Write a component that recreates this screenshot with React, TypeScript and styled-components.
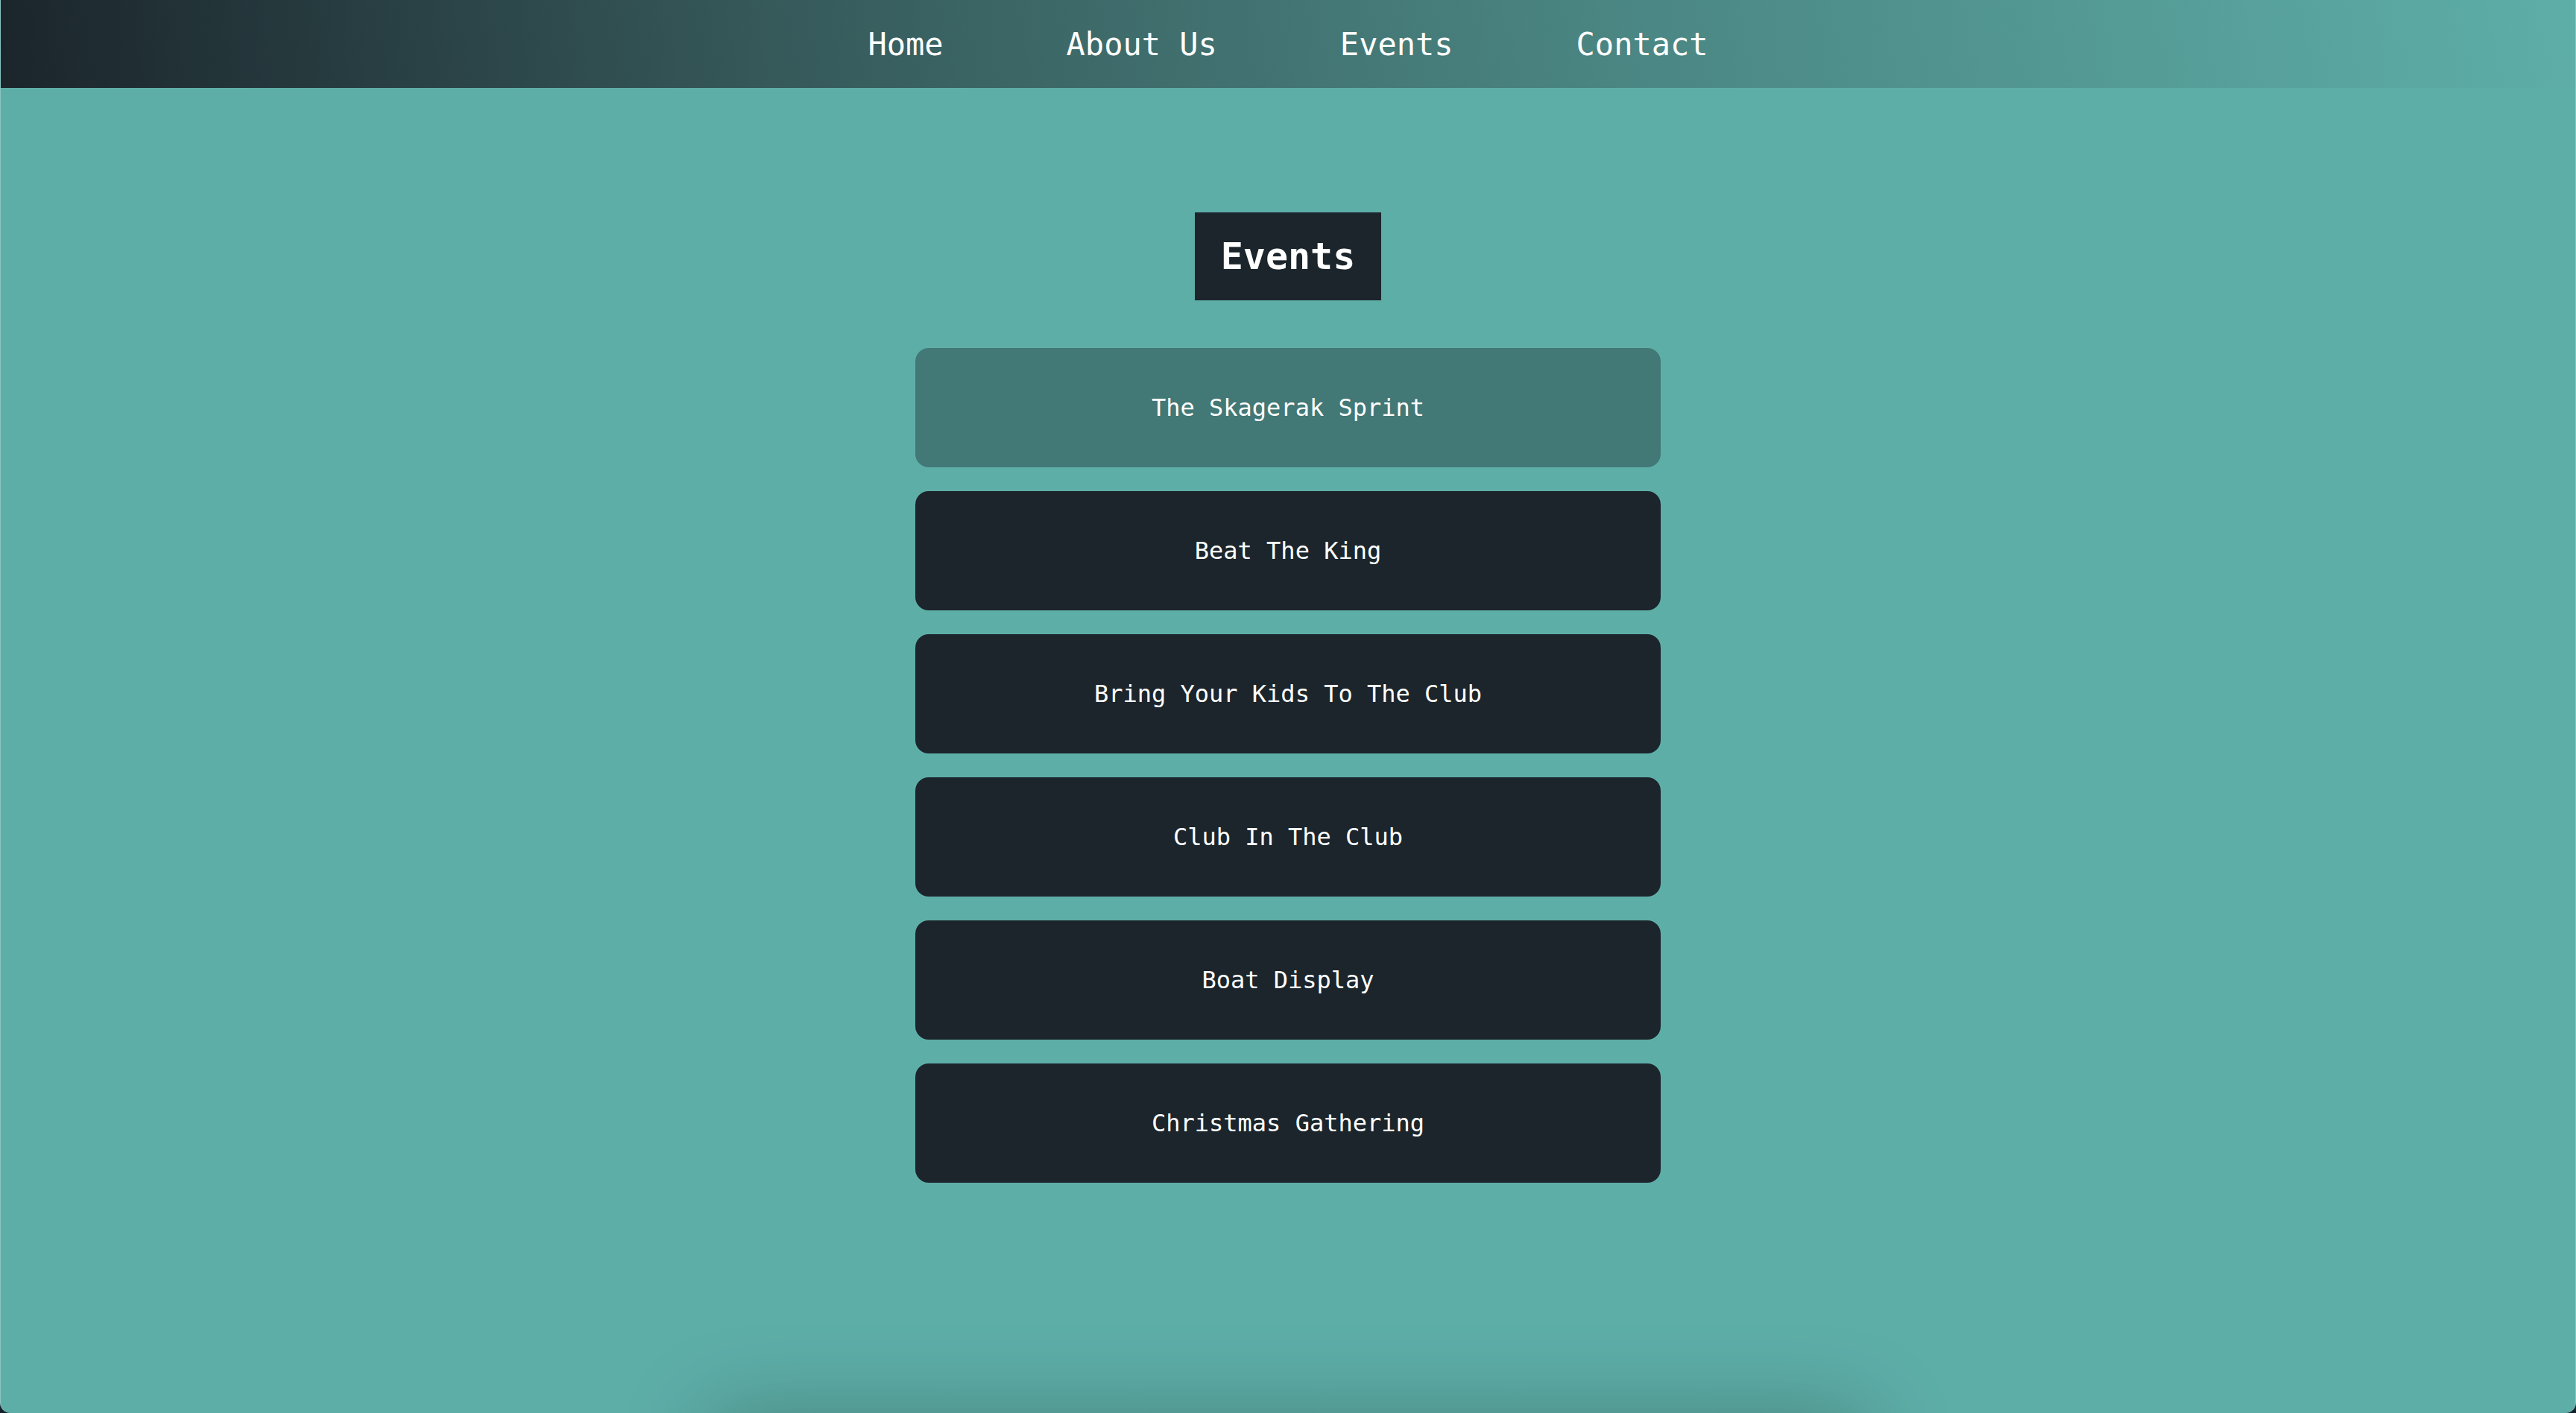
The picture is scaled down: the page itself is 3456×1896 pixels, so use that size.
import React from "react";
import styled, { createGlobalStyle } from "styled-components";

const GlobalStyle = createGlobalStyle`
  * { box-sizing: border-box; }
  html, body { margin: 0; padding: 0; background: #16202a; }
  body { font-family: "DejaVu Sans Mono", "Liberation Mono", monospace; }
`;

const Frame = styled.div`
  height: 1896px;
  overflow: hidden;
  background: #5eaea8;
  border-left: 1px solid rgba(255, 255, 255, 0.28);
  border-right: 1px solid rgba(255, 255, 255, 0.28);
  border-radius: 0 0 14px 14px;
  display: flex;
  flex-direction: column;
`;

const NavBar = styled.nav`
  height: 118px;
  flex-shrink: 0;
  background: linear-gradient(82deg, #1b252b 0%, #36595a 30%, #4a8582 62%, #5eaea8 100%);
  display: flex;
  align-items: center;
  justify-content: center;
  gap: 165px;
`;

const NavLink = styled.a`
  color: #ffffff;
  font-size: 42px;
  line-height: 1;
  text-decoration: none;
  cursor: pointer;
  padding-top: 2px;
`;

const Main = styled.main`
  min-height: calc(1896px - 118px);
  flex-shrink: 0;
  display: flex;
  flex-direction: column;
  align-items: center;
  padding-top: 167px;
`;

const Heading = styled.h1`
  margin: 0 0 64px 0;
  background: #1b252b;
  color: #ffffff;
  font-size: 50px;
  font-weight: 700;
  line-height: 50px;
  padding: 34px 35px;
`;

const EventList = styled.ul`
  list-style: none;
  margin: 0;
  padding: 0;
  display: flex;
  flex-direction: column;
  gap: 32px;
`;

const EventButton = styled.li<{ $active?: boolean }>`
  width: 1000px;
  height: 160px;
  border-radius: 18px;
  background: ${(p) => (p.$active ? "#427876" : "#1b252b")};
  color: #ffffff;
  font-size: 32px;
  display: flex;
  align-items: center;
  justify-content: center;
  cursor: pointer;
`;

const Footer = styled.footer`
  flex-shrink: 0;
  align-self: center;
  width: 1560px;
  height: 200px;
  background: #5eaea8;
  box-shadow: 0 0 120px rgba(0, 0, 0, 0.24);
`;

const events = [
  "The Skagerak Sprint",
  "Beat The King",
  "Bring Your Kids To The Club",
  "Club In The Club",
  "Boat Display",
  "Christmas Gathering",
];

export default function App() {
  return (
    <>
      <GlobalStyle />
      <Frame>
        <NavBar>
          <NavLink>Home</NavLink>
          <NavLink>About Us</NavLink>
          <NavLink>Events</NavLink>
          <NavLink>Contact</NavLink>
        </NavBar>
        <Main>
          <Heading>Events</Heading>
          <EventList>
            {events.map((e, i) => (
              <EventButton key={e} $active={i === 0}>
                {e}
              </EventButton>
            ))}
          </EventList>
        </Main>
        <Footer />
      </Frame>
    </>
  );
}
